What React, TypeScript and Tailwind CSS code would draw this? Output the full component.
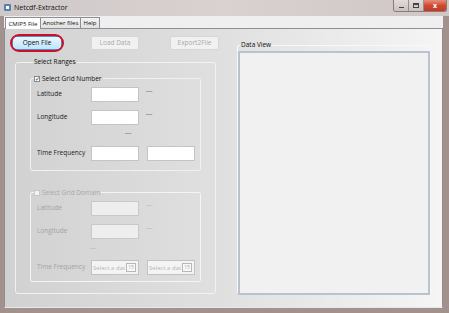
import React from 'react';

const font = { fontFamily: '"Open Sans", "Noto Sans", "Liberation Sans", sans-serif' };

function TextBox({ disabled }: { disabled?: boolean }) {
    return (
        <div
            className={`w-[48px] h-[15px] border ${disabled ? 'bg-[#eeeeee] border-[#c9c9c9]' : 'bg-white border-[#c4c4c4]'}`}
        />
    );
}

function DatePicker() {
    return (
        <div className="w-[48px] h-[15px] border border-[#c2c2c2] bg-[#f4f4f4] flex items-center pl-[1px] pr-[2px] justify-between">
            <span className="text-[6px] text-[#b4b4b4] leading-none whitespace-nowrap overflow-hidden">Select a dat</span>
            <span className="w-[10px] h-[9px] border border-[#b7b7b7] bg-[#f8f8f8] text-[5px] text-[#9aa] leading-none flex items-center justify-center">15</span>
        </div>
    );
}

function Row({ label, disabled, children }: { label: string; disabled?: boolean; children: React.ReactNode }) {
    return (
        <div className="flex items-center h-[15px]">
            <span className={`w-[60px] pl-[6px] text-[6.5px] leading-none whitespace-nowrap ${disabled ? 'text-[#a3a3a3]' : 'text-[#222]'}`}>{label}</span>
            {children}
        </div>
    );
}

function Dash({ disabled }: { disabled?: boolean }) {
    return <span className={`text-[6.5px] leading-none ml-[7px] -mt-[6px] ${disabled ? 'text-[#b0b0b0]' : 'text-[#555]'}`}>---</span>;
}

export default function App() {
    return (
        <div className="w-[449px] h-[313px] bg-[#a3918e] flex flex-col overflow-hidden" style={font}>
            {/* Title bar */}
            <div className="h-[16px] flex items-start bg-gradient-to-r from-[#cfc8c8] via-[#d9d2d1] to-[#cfc6c5]">
                <div className="mt-[4px] ml-[4px] w-[7px] h-[7px] bg-[#5a7fb0] rounded-[1px] flex items-center justify-center">
                    <div className="w-[3px] h-[3px] bg-white" />
                </div>
                <span className="ml-[3px] mt-[4px] text-[7px] leading-none text-[#111]">Netcdf-Extractor</span>
                <div className="ml-auto mr-[2px] flex h-[12px] rounded-b-[3px] overflow-hidden border border-t-0 border-[#8a7b7b]">
                    <div className="w-[15px] bg-gradient-to-b from-[#e4dcdc] to-[#c9c0c0] flex items-center justify-center border-r border-[#9a8c8c]">
                        <div className="w-[5px] h-[1px] bg-[#444] mt-[3px]" />
                    </div>
                    <div className="w-[15px] bg-gradient-to-b from-[#e4dcdc] to-[#c9c0c0] flex items-center justify-center border-r border-[#9a8c8c]">
                        <div className="w-[6px] h-[5px] border border-[#444] border-t-2" />
                    </div>
                    <div className="w-[22px] bg-gradient-to-b from-[#e58d7c] via-[#cf4a32] to-[#c43a24] flex items-center justify-center">
                        <span className="text-[7px] leading-none text-white font-bold">x</span>
                    </div>
                </div>
            </div>

            {/* Client area */}
            <div className="flex-1 ml-[4px] mr-[6px] mb-[5px] bg-[#efefef] flex flex-col">
                {/* Tabs */}
                <div className="h-[12px] flex items-end pl-[1px]">
                    <div className="h-[12px] w-[36px] bg-white border border-b-0 border-[#8e8f94] text-[6px] leading-none flex items-center justify-center text-[#111] relative top-[1px] z-10">CMIP5 File</div>
                    <div className="h-[11px] w-[40px] bg-gradient-to-b from-[#f3f3f3] to-[#e1e1e1] border border-b-0 border-l-0 border-[#8e8f94] text-[6px] leading-none flex items-center justify-center text-[#111]">Another files</div>
                    <div className="h-[11px] w-[19px] bg-gradient-to-b from-[#f3f3f3] to-[#e1e1e1] border border-b-0 border-l-0 border-[#8e8f94] text-[6px] leading-none flex items-center justify-center text-[#111]">Help</div>
                </div>

                {/* Tab page */}
                <div className="flex-1 border border-[#8e8f94] border-b-[#e8e8e8] bg-gradient-to-r from-[#d1d1d1] via-[#e0e0e0] to-[#f5f5f5] flex items-start">
                    {/* Left column */}
                    <div className="w-[224px] flex flex-col">
                        <div className="flex items-center mt-[7px] ml-[7px] h-[14px]">
                            <div className="relative">
                                <div className="absolute -inset-[2px] rounded-full border-2 border-[#c8102e]" />
                                <div className="w-[50px] h-[14px] rounded-[3px] border border-[#5c8fc1] bg-gradient-to-b from-[#eaf6fd] to-[#bee6fd] text-[6.5px] leading-none text-[#111] flex items-center justify-center">Open File</div>
                            </div>
                            <div className="ml-[29px] w-[48px] h-[14px] rounded-[2px] border border-[#d6d6d6] bg-[#f1f1f1] text-[6.5px] leading-none text-[#a9a9a9] flex items-center justify-center">Load Data</div>
                            <div className="ml-[31px] w-[49px] h-[14px] rounded-[2px] border border-[#d6d6d6] bg-[#f1f1f1] text-[6.5px] leading-none text-[#a9a9a9] flex items-center justify-center">Export2File</div>
                        </div>

                        <fieldset className="ml-[10px] mt-[9px] w-[198px] h-[235px] border border-[#f2f2f2] rounded-[3px] px-[14px] pt-[10px]">
                            <legend className="ml-[3px] px-[1px] text-[6.5px] leading-none text-[#111]">Select Ranges</legend>

                            <fieldset className="w-[171px] h-[95px] border border-[#f0f0f0] rounded-[2px] pt-[5px]">
                                <legend className="ml-[3px] flex items-center gap-[2px] pr-[1px] text-[6.5px] leading-none text-[#111]">
                                    <span className="w-[6px] h-[6px] border border-[#8a8a8a] bg-white text-[6px] leading-none text-[#223] flex items-center justify-center">✓</span>
                                    Select Grid Number
                                </legend>
                                <div className="flex flex-col gap-[8px]">
                                    <Row label="Latitude"><TextBox /><Dash /></Row>
                                    <Row label="Longitude"><TextBox /><Dash /></Row>
                                </div>
                                <div className="h-[21px] flex items-center pl-[94px]">
                                    <span className="text-[6.5px] leading-none text-[#555] -mt-[4px]">---</span>
                                </div>
                                <Row label="Time Frequency"><TextBox /><div className="ml-[8px]"><TextBox /></div></Row>
                            </fieldset>

                            <fieldset className="mt-[19px] w-[171px] h-[92px] border border-[#f4f4f4] rounded-[2px] pt-[5px]">
                                <legend className="ml-[3px] flex items-center gap-[2px] pr-[1px] text-[6.5px] leading-none text-[#a8a8a8]">
                                    <span className="w-[6px] h-[6px] border border-[#c8c8c8] bg-[#f4f4f4]" />
                                    Select Grid Domain
                                </legend>
                                <div className="flex flex-col gap-[8px]">
                                    <Row label="Latitude" disabled><TextBox disabled /><Dash disabled /></Row>
                                    <Row label="Longitude" disabled><TextBox disabled /><Dash disabled /></Row>
                                </div>
                                <div className="h-[21px] flex items-center pl-[59px]">
                                    <span className="text-[6.5px] leading-none text-[#b0b0b0] -mt-[2px]">---</span>
                                </div>
                                <Row label="Time Frequency" disabled><DatePicker /><div className="ml-[8px]"><DatePicker /></div></Row>
                            </fieldset>
                        </fieldset>
                    </div>

                    {/* Right column */}
                    <fieldset className="ml-[8px] mt-[13px] w-[194px] h-[252px] border border-[#f8f8f8] rounded-[2px] px-0">
                        <legend className="ml-[2px] px-[1px] text-[6.5px] leading-none text-[#111]">Data View</legend>
                        <div className="mt-[2px] h-[244px] border-2 border-[#b9c3cf] bg-[#f1f1f1]" />
                    </fieldset>
                </div>
            </div>
        </div>
    );
}
